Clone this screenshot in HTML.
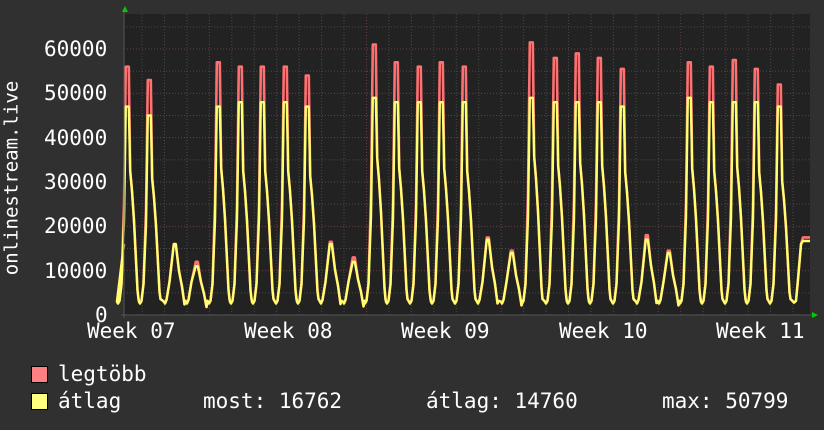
<!DOCTYPE html><html><head><meta charset="utf-8"><style>
html,body{margin:0;padding:0;background:#303030;}
body{width:824px;height:430px;overflow:hidden;position:relative;font-family:"DejaVu Sans Mono","Liberation Mono",monospace;color:#fff;}
.t{position:absolute;font-size:21px;white-space:pre;line-height:1;}
.sq{position:absolute;width:15px;height:15px;border:1px solid #000;}
</style></head><body>
<svg id="g" width="824" height="430" style="position:absolute;left:0;top:0"></svg>
<div class="t" style="left:44px;top:39px">60000</div>
<div class="t" style="left:44px;top:83px">50000</div>
<div class="t" style="left:44px;top:128px">40000</div>
<div class="t" style="left:44px;top:172px">30000</div>
<div class="t" style="left:44px;top:216px">20000</div>
<div class="t" style="left:44px;top:261px">10000</div>
<div class="t" style="left:95px;top:305px">0</div>
<div class="t" style="left:87px;top:321px">Week 07</div>
<div class="t" style="left:244px;top:321px">Week 08</div>
<div class="t" style="left:401px;top:321px">Week 09</div>
<div class="t" style="left:559px;top:321px">Week 10</div>
<div class="t" style="left:716px;top:321px">Week 11</div>
<div class="t" style="left:12px;top:178px;font-size:19px;transform:translate(-50%,-50%) rotate(-90deg);transform-origin:center;">onlinestream.live</div>
<div class="sq" style="left:31px;top:366px;background:#ff8080"></div>
<div class="sq" style="left:31px;top:393px;background:#ffff80"></div>
<div class="t" style="left:58px;top:364px">legtöbb</div>
<div class="t" style="left:58px;top:391px">átlag</div>
<div class="t" style="left:203px;top:391px">most: 16762</div>
<div class="t" style="left:426px;top:391px">átlag: 14760</div>
<div class="t" style="left:662px;top:391px">max: 50799</div>
<script>
var s=document.getElementById('g'),NS='http://www.w3.org/2000/svg';
function el(n,a){var e=document.createElementNS(NS,n);for(var k in a)e.setAttribute(k,a[k]);s.appendChild(e);return e;}
var L=124,R=810,T=14,B=315;
el('rect',{x:L,y:T,width:R-L,height:B-T,fill:'#222'});
function Y(v){return B-v*266/60000;}
for(var v=5000;v<=65000;v+=5000){var y=Y(v);if(y<T)break;el('line',{x1:L,x2:R,y1:y,y2:y,stroke:v%10000==0?'#6a4040':'#4a4a4a','stroke-dasharray':'1,2'});}
for(var i=0;i<31;i++){var x=142+i*22.45;if(x>R)break;el('line',{x1:x,x2:x,y1:T,y2:B,stroke:(i%7==3)?'#6a4040':'#4a4a4a','stroke-dasharray':'1,2'});}
var d=[[128,56,47,1],[150,53,45,1],[175,16,16,0],[197,12,11,0],[219,57,47,1],[241,56,48,1],[263,56,48,1],[286,56,48,1],[308,54,47,1],[331,16.5,16,0],[354,13,12,0],[375,61,49,1],[397,57,48,1],[420,56,48,1],[442,57,48,1],[465,56,48,1],[488,17.5,17,0],[512,14.5,14,0],[532,61.5,49,1],[556,58,48,1],[578,59,48,1],[600,58,48,1],[623,55.5,47,1],[647,18,17,0],[669,14.5,14,0],[690,57,49,1],[712,56,48,1],[735,57.5,48,1],[757,55.5,48,1],[780,52,47,1]];
function pts(idx){var p=[[L,16000]];d.forEach(function(q){var x=q[0],M=q[idx]*1000,P=q[1]*1000;
if(q[3]){p.push([x-11,3000],[x-10,2600],[x-8.5,3200],[x-6.5,7000],[x-4,0.45*M],[x-2.2,M],[x+0.8,M],[x+2.2,0.58*P],[x+4,0.5*P],[x+6,0.38*P],[x+8,0.22*P],[x+9.5,0.1*P],[x+10.5,3600]);}
else{p.push([x-11,3000],[x-10,2600],[x-8.5,3400],[x-5.5,7500],[x-1.2,M],[x+0.8,M],[x+4,0.62*P],[x+7,0.4*P],[x+9.5,0.15*P],[x+10.5,3200]);}});
p.push([794,2800],[796,3200],[798,8000],[801,16000],[803,idx==1?17500:16700],[R,idx==1?17500:16700]);
return p.map(function(a){return a[0].toFixed(1)+','+Y(a[1]).toFixed(1);}).join(' ');}
el('polyline',{points:pts(1),fill:'none',stroke:'#ff7070','stroke-width':2.6,'stroke-linejoin':'round'});
el('polyline',{points:pts(2),fill:'none',stroke:'#ffff70','stroke-width':2.4,'stroke-linejoin':'round'});
el('line',{x1:L,x2:L,y1:10,y2:B+3,stroke:'#555'});
el('line',{x1:L-3,x2:R+3,y1:B,y2:B,stroke:'#555'});
el('polygon',{points:'122,12 128,12 125,6',fill:'#0c0'});
el('polygon',{points:'812,312 812,318 818,315',fill:'#0c0'});
</script>
</body></html>
